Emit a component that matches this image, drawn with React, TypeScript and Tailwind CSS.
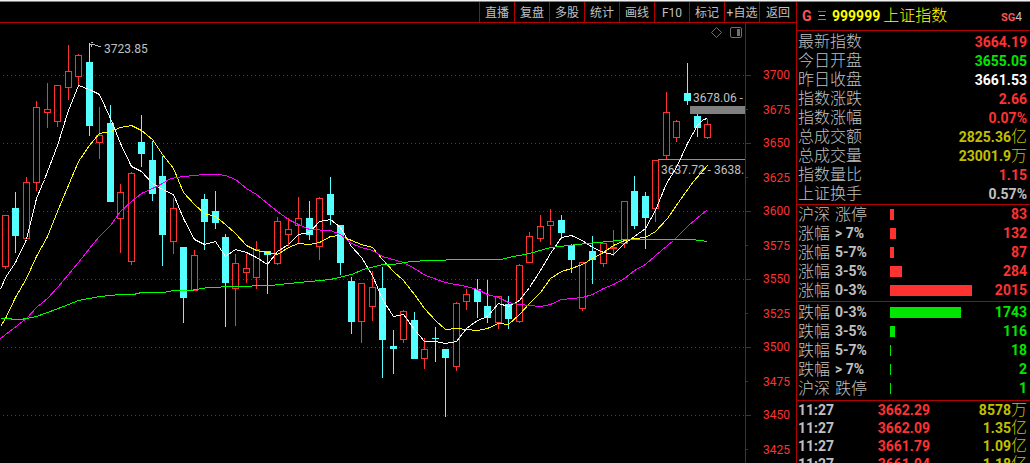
import React from "react";

type Tone = "red" | "green" | "white" | "gold" | "silver";

const TONES: Record<Tone, string> = {
  red: "text-[#ff3232]",
  green: "text-[#00e600]",
  white: "text-white",
  gold: "text-[#c0c000]",
  silver: "text-[#c0c0c0]",
};

const MENU = ["直播", "复盘", "多股", "统计", "画线", "F10", "标记", "+自选"];

const QUOTES: { label: string; value: string; unit?: string; tone: Tone }[] = [
  { label: "最新指数", value: "3664.19", tone: "red" },
  { label: "今日开盘", value: "3655.05", tone: "green" },
  { label: "昨日收盘", value: "3661.53", tone: "white" },
  { label: "指数涨跌", value: "2.66", tone: "red" },
  { label: "指数涨幅", value: "0.07%", tone: "red" },
  { label: "总成交额", value: "2825.36", unit: "亿", tone: "gold" },
  { label: "总成交量", value: "23001.9", unit: "万", tone: "gold" },
  { label: "指数量比", value: "1.15", tone: "red" },
  { label: "上证换手", value: "0.57%", tone: "silver" },
];

type Breadth = { name: string; range: string; count: number };

const RISING: Breadth[] = [
  { name: "沪深", range: "涨停", count: 83 },
  { name: "涨幅", range: "> 7%", count: 132 },
  { name: "涨幅", range: "5-7%", count: 87 },
  { name: "涨幅", range: "3-5%", count: 284 },
  { name: "涨幅", range: "0-3%", count: 2015 },
];

const FALLING: Breadth[] = [
  { name: "跌幅", range: "0-3%", count: 1743 },
  { name: "跌幅", range: "3-5%", count: 116 },
  { name: "跌幅", range: "5-7%", count: 18 },
  { name: "跌幅", range: "> 7%", count: 2 },
  { name: "沪深", range: "跌停", count: 1 },
];

const TRADES = [
  { time: "11:27", price: "3662.29", amount: "8578", unit: "万" },
  { time: "11:27", price: "3662.09", amount: "1.35", unit: "亿" },
  { time: "11:27", price: "3661.79", amount: "1.09", unit: "亿" },
  { time: "11:27", price: "3661.94", amount: "1.18", unit: "亿" },
];

const PRICES = [3700, 3675, 3650, 3625, 3600, 3575, 3550, 3525, 3500, 3475, 3450, 3425];

// [centre x, rising, wick top, body top, body bottom, wick bottom]
const CANDLES: [number, 0 | 1, number, number, number, number][] = [
  [5, 1, 215, 215, 267, 269],
  [15, 0, 192, 208, 236, 253],
  [26, 1, 177, 182, 239, 239],
  [36, 1, 101, 107, 183, 191],
  [47, 1, 83, 109, 113, 128],
  [57, 1, 85, 85, 122, 127],
  [68, 1, 45, 71, 88, 100],
  [78, 1, 54, 55, 77, 85],
  [89, 0, 43, 62, 126, 136],
  [99, 1, 107, 135, 143, 159],
  [110, 0, 105, 123, 202, 202],
  [120, 1, 184, 192, 219, 253],
  [131, 1, 172, 173, 262, 265],
  [141, 0, 115, 142, 154, 167],
  [152, 0, 141, 160, 194, 201],
  [162, 0, 156, 176, 235, 266],
  [173, 1, 198, 208, 242, 254],
  [183, 0, 247, 247, 298, 323],
  [194, 1, 250, 255, 291, 291],
  [204, 0, 194, 199, 222, 250],
  [215, 0, 191, 211, 223, 229],
  [225, 0, 234, 237, 283, 327],
  [235, 1, 254, 263, 289, 326],
  [246, 1, 254, 268, 273, 283],
  [256, 1, 241, 249, 278, 289],
  [267, 0, 251, 251, 255, 294],
  [277, 1, 217, 221, 264, 265],
  [288, 1, 218, 229, 235, 246],
  [298, 1, 197, 218, 226, 243],
  [309, 0, 201, 218, 235, 240],
  [319, 1, 197, 198, 247, 260],
  [330, 0, 177, 194, 215, 225],
  [340, 0, 225, 225, 263, 275],
  [351, 0, 277, 281, 322, 334],
  [361, 1, 283, 283, 322, 343],
  [372, 1, 271, 287, 307, 321],
  [382, 0, 267, 288, 340, 378],
  [393, 0, 330, 346, 349, 374],
  [403, 1, 310, 311, 340, 343],
  [414, 0, 312, 320, 359, 359],
  [424, 1, 338, 349, 359, 369],
  [435, 0, 327, 338, 339, 362],
  [445, 0, 349, 349, 358, 417],
  [456, 1, 302, 303, 367, 371],
  [466, 1, 289, 294, 302, 310],
  [477, 0, 279, 289, 302, 318],
  [487, 0, 280, 306, 318, 323],
  [498, 1, 296, 296, 323, 329],
  [508, 0, 296, 304, 319, 329],
  [519, 1, 264, 265, 322, 323],
  [529, 1, 232, 236, 263, 263],
  [540, 1, 215, 226, 239, 242],
  [550, 1, 209, 221, 226, 245],
  [561, 0, 215, 220, 233, 239],
  [571, 0, 244, 245, 260, 273],
  [582, 1, 262, 262, 309, 311],
  [592, 0, 236, 251, 260, 284],
  [603, 1, 243, 243, 264, 267],
  [613, 1, 230, 247, 249, 256],
  [624, 1, 201, 201, 244, 248],
  [634, 0, 176, 191, 226, 229],
  [645, 0, 192, 196, 218, 249],
  [655, 1, 160, 160, 209, 222],
  [666, 1, 92, 112, 156, 159],
  [676, 1, 120, 121, 138, 142],
  [687, 0, 63, 93, 101, 105],
  [697, 0, 114, 116, 128, 137],
  [707, 1, 119, 124, 138, 139],
];

const AVERAGES = [
  {
    color: "#ffffff",
    points:
      "0,289 5,277 15,262 26,239 36,198 44,179 57,145 68,110 78,85 89,89 99,94 110,118 120,143 131,166 141,171 152,183 162,189 173,194 183,218 194,239 204,244 215,241 225,256 235,249 246,252 256,257 267,264 277,251 288,244 298,234 309,232 319,221 330,219 340,227 351,246 361,257 372,275 382,299 393,316 403,314 414,329 424,341 435,341 445,343 456,341 466,328 477,320 487,316 498,303 508,306 519,300 529,287 540,270 550,253 561,237 571,235 582,240 592,247 603,252 613,254 624,243 634,236 645,228 655,210 666,183 676,167 687,143 697,125 703,119 707,118",
  },
  {
    color: "#ffff00",
    points:
      "0,326 5,318 15,297 26,278 36,256 47,236 57,211 70,180 78,161 89,145 99,133 110,131 120,127 131,125 141,130 152,139 162,154 173,168 183,192 194,204 204,213 215,216 225,224 235,233 246,245 256,250 267,252 277,254 288,247 298,243 309,244 319,242 330,236 340,235 351,240 361,244 372,247 382,259 393,271 403,280 414,294 424,308 435,320 445,329 456,328 466,329 477,330 487,328 498,323 508,324 519,314 529,303 540,292 550,278 561,271 571,268 582,264 592,258 603,252 613,245 624,240 634,238 645,237 655,231 667,218 680,199 693,181 707,165",
  },
  {
    color: "#ff00ff",
    points:
      "0,338 26,318 36,307 47,298 57,287 68,274 78,262 89,248 99,236 110,225 120,211 131,201 141,193 152,188 162,183 170,178 183,176 204,174 217,174 225,175 235,179 246,188 256,194 267,203 277,211 288,219 298,224 309,229 330,230 340,234 351,243 361,247 372,250 382,256 403,262 414,268 425,275 445,282 466,286 477,289 487,294 498,297 508,302 519,304 529,305 540,306 550,304 561,299 582,297 592,294 603,288 613,284 624,278 634,270 645,264 655,255 673,240 688,225 707,209",
  },
  {
    color: "#00ff00",
    points:
      "0,318 10,318 12,319 20,319 26,318 36,316 47,312 63,306 78,300 99,296 120,294 133,294 141,292 163,292 173,290 190,290 208,287 233,286 270,285 288,283 309,281 330,279 351,274 363,269 382,264 393,264 410,261 430,260 462,259 501,259 508,257 529,253 550,247 577,244 597,242 618,240 623,239 692,239 707,241",
  },
];

function Toolbar() {
  return (
    <nav className="flex h-[21px] justify-end border-b border-[#b40000] text-xs text-[#c0c0c0]">
      {MENU.map((item) => (
        <button
          key={item}
          type="button"
          className="w-[35px] shrink-0 whitespace-nowrap border-l border-[#b40000] pt-px text-center leading-5"
        >
          {item}
        </button>
      ))}
      <button type="button" className="w-[37px] shrink-0 border-l border-[#b40000] pt-px text-center leading-5">
        返回
      </button>
    </nav>
  );
}

function Candle({ data }: { data: (typeof CANDLES)[number] }) {
  const [x, rising, high, top, bottom, low] = data;
  const color = rising ? "#ff3232" : "#54ffff";
  return (
    <g>
      <rect x={x} y={high} width={1} height={low - high} fill={color} />
      {rising ? (
        <rect
          x={x - 2.5}
          y={top + 0.5}
          width={6}
          height={bottom - top - 1}
          fill="#000000"
          stroke={color}
          strokeWidth={1}
        />
      ) : (
        <rect x={x - 3} y={top} width={7} height={bottom - top} fill={color} />
      )}
    </g>
  );
}

function Plot() {
  return (
    <div className="relative min-w-0 flex-1 overflow-hidden">
      <svg className="block h-full w-full" role="img" aria-label="上证指数">
        <g transform="translate(0 -23)">
          <g shapeRendering="crispEdges" stroke="#a01818" strokeDasharray="1 3">
            {[75, 143, 211, 279, 347, 415].map((y) => (
              <line key={y} x1="3" x2="745" y1={y + 0.5} y2={y + 0.5} />
            ))}
          </g>
          <g fill="#c0c0c0" fontSize="12">
            <text x="104" y="53">3723.85</text>
            <text x="693" y="102">3678.06 -</text>
            <text x="661" y="174">3637.72 - 3638.</text>
          </g>
          <g shapeRendering="crispEdges">
            <rect x="690" y="106" width="55" height="8" fill="#808080" />
            <rect x="658" y="159" width="87" height="1" fill="#909090" />
            {CANDLES.map((c) => (
              <Candle key={c[0]} data={c} />
            ))}
            <path d="M93 42.500h-2.500M90 44.500h5M95 45.500h3M98 46.500h3M91.500 45v2" fill="none" stroke="#c0c0c0" />
            {AVERAGES.map((line) => (
              <polyline
                key={line.color}
                points={line.points}
                transform="translate(0.5 0.5)"
                fill="none"
                stroke={line.color}
                strokeWidth="1"
              />
            ))}
          </g>
        </g>
      </svg>
      <div className="absolute right-[3px] top-1 flex items-center gap-2">
        <button type="button" aria-label="◇">
          <svg width="11" height="11" className="block" fill="none" stroke="#707070">
            <path d="M5.500 .5l5 5-5 5-5-5z" />
          </svg>
        </button>
        <button type="button" aria-label="◨">
          <svg width="12" height="11" className="block" fill="none" stroke="#707070">
            <rect x=".5" y=".5" width="11" height="10" rx="1.500" />
            <rect x="7" y="2" width="3" height="7" fill="#707070" stroke="none" />
          </svg>
        </button>
      </div>
    </div>
  );
}

function PriceAxis() {
  return (
    <ol className="w-[51px] shrink-0 overflow-hidden border-l border-[#b40000] pt-[35px] text-xs text-[#ff3232]">
      {PRICES.map((price, i) => (
        <li key={price} className="flex h-[34px] items-center">
          <span className="w-[17px]">
            <span className={i % 2 ? "block h-px w-[2px] bg-[#b40000]" : "block h-px w-[5px] bg-[#b40000]"} />
          </span>
          <span className={i % 2 ? "pt-[2px]" : ""}>{price}</span>
        </li>
      ))}
    </ol>
  );
}

function BreadthTable({ rows, rising }: { rows: Breadth[]; rising: boolean }) {
  return (
    <table className="w-full table-fixed border-collapse">
      <tbody>
        {rows.map((row) => {
          const word = row.range.endsWith("停");
          return (
            <tr key={row.name + row.range} className="h-[19px] leading-[19px]">
              <th scope="row" className="w-[93px] p-0 pl-px text-left font-light text-[#c0c0c0]">
                <span className="flex h-[19px] items-center gap-[5px]">
                  <span className="text-base leading-[19px]">{row.name}</span>
                  <span className={word ? "text-base leading-[19px]" : "text-sm font-bold leading-[19px]"}>
                    {row.range}
                  </span>
                </span>
              </th>
              <td className="p-0">
                <div
                  className={rising ? "h-[11px] bg-[#ff3232]" : "h-[11px] bg-[#00e600]"}
                  style={{ width: Math.ceil((row.count / 2015) * 82) }}
                />
              </td>
              <td
                className={
                  rising
                    ? "w-[50px] p-0 pr-[3px] text-right text-sm font-bold leading-[19px] text-[#ff3232]"
                    : "w-[50px] p-0 pr-[3px] text-right text-sm font-bold leading-[19px] text-[#00e600]"
                }
              >
                {row.count}
              </td>
            </tr>
          );
        })}
      </tbody>
    </table>
  );
}

function Figure({ value, unit }: { value: string; unit?: string }) {
  return (
    <span className="flex items-center justify-end">
      <span className="text-sm font-bold leading-[18px]">{value}</span>
      {unit && <span className="text-base font-light leading-[18px]">{unit}</span>}
    </span>
  );
}

function Sidebar() {
  return (
    <aside className="w-[234px] shrink-0 overflow-hidden border-l border-[#b40000]">
      <header className="flex h-[29px] items-center border-b border-[#b40000] pl-[5px] pr-2 text-sm font-bold text-[#ffff00]">
        <span className="w-4 text-[#ff5050]">G</span>
        <svg width="8" height="10" className="mr-[6px] block" shapeRendering="crispEdges" aria-hidden="true">
          <rect y="0" width="8" height="1" fill="#ff3232" />
          <rect x="1" y="4" width="6" height="1" fill="#c0c0c0" />
          <rect y="8" width="8" height="1" fill="#00e600" />
        </svg>
        <span>999999</span>
        <h1 className="ml-[3px] text-base font-light">上证指数</h1>
        <span className="ml-auto pt-[2px] text-[11px] text-[#ff5050]">
          SG<span className="text-xs font-normal text-[#c0c0c0]">4</span>
        </span>
      </header>
      <section className="border-b border-[#b40000] pb-px pt-px">
        <table className="w-full border-collapse">
          <tbody>
            {QUOTES.map((q) => (
              <tr key={q.label} className="h-[19px]">
                <th scope="row" className="p-0 pl-px text-left text-base font-light leading-[19px] text-[#c0c0c0]">
                  {q.label}
                </th>
                <td className={`p-0 pr-[3px] ${TONES[q.tone]}`}>
                  <Figure value={q.value} unit={q.unit} />
                </td>
              </tr>
            ))}
          </tbody>
        </table>
      </section>
      <section className="border-b border-[#b40000] pb-px">
        <BreadthTable rows={RISING} rising />
      </section>
      <section className="border-b border-[#b40000] pb-[2px] pt-px">
        <BreadthTable rows={FALLING} rising={false} />
      </section>
      <table className="w-full table-fixed border-collapse">
        <tbody>
          {TRADES.map((t, i) => (
            <tr key={i} className="h-[18px]">
              <td className="w-[50px] p-0 pl-px text-sm font-bold leading-[18px] text-[#c0c0c0]">{t.time}</td>
              <td className="w-[83px] p-0 text-[#ff3232]">
                <Figure value={t.price} />
              </td>
              <td className="p-0 pr-[3px] text-[#c0c000]">
                <Figure value={t.amount} unit={t.unit} />
              </td>
            </tr>
          ))}
        </tbody>
      </table>
    </aside>
  );
}

export default function App() {
  return (
    <div className="flex h-screen flex-col overflow-hidden bg-black font-['Roboto','Noto_Sans_CJK_SC',sans-serif]">
      <div className="h-[2px] shrink-0 border-b border-[#808080] bg-[#f0f0f0]" />
      <div className="flex min-h-0 flex-1">
        <main className="flex min-w-0 flex-1 flex-col">
          <Toolbar />
          <div className="flex min-h-0 flex-1">
            <Plot />
            <PriceAxis />
          </div>
        </main>
        <Sidebar />
      </div>
    </div>
  );
}
